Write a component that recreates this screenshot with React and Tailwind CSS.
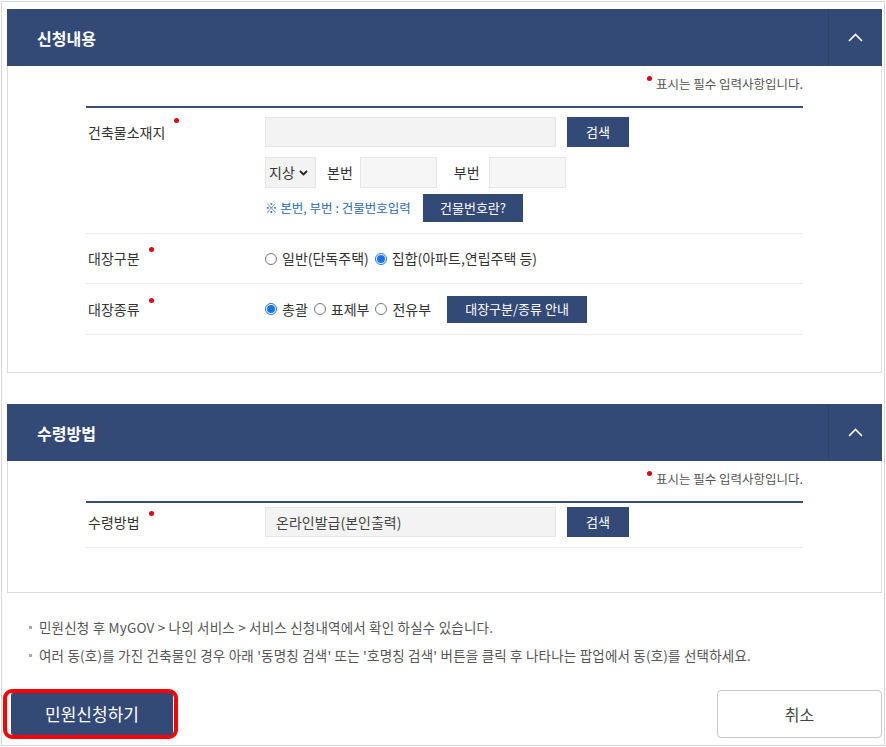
import { useState } from 'react';

const FONT = { fontFamily: '"Noto Sans CJK KR", "Noto Sans", sans-serif' };

function Req() {
  return <span className="inline-block w-[5px] h-[5px] rounded-full bg-[#e60012] ml-[9px] relative -top-[12px]" />;
}

function SectionHeader({ title }) {
  return (
    <div className="flex h-[57px] bg-[#344a76]">
      <div className="flex-1 flex items-center pl-[30px] text-white text-[16px] font-bold">{title}</div>
      <button className="w-[54px] flex items-center justify-center border-l border-[#2e4169]">
        <svg width="15" height="9" viewBox="0 0 15 9" fill="none">
          <path d="M1 8 L7.5 1.5 L14 8" stroke="#fff" strokeWidth="1.6" />
        </svg>
      </button>
    </div>
  );
}

function RequiredNote() {
  return (
    <div className="h-[40px] pt-[10px] flex justify-end items-start">
      <span className="text-[12.5px] leading-[16px] text-[#555]">
        <span className="inline-block w-[5px] h-[5px] rounded-full bg-[#e60012] mr-[4px] relative -top-[8px]" />
        표시는 필수 입력사항입니다.
      </span>
    </div>
  );
}

function NavyBtn({ children, className }) {
  return (
    <button className={`bg-[#344a76] text-white text-[13px] flex items-center justify-center shrink-0 ${className}`}>
      {children}
    </button>
  );
}

function Radio({ checked, label, onClick }) {
  return (
    <label className="flex items-center cursor-pointer" onClick={onClick}>
      {checked ? (
        <span className="w-[12px] h-[12px] rounded-full border border-[#1a73e8] bg-white flex items-center justify-center">
          <span className="w-[8px] h-[8px] rounded-full bg-[#1a73e8]" />
        </span>
      ) : (
        <span className="w-[12px] h-[12px] rounded-full border border-[#777] bg-white" />
      )}
      <span className="ml-[5px] text-[14px] text-[#333]">{label}</span>
    </label>
  );
}

export default function App() {
  const [gubun, setGubun] = useState('집합');
  const [jongryu, setJongryu] = useState('총괄');

  return (
    <div style={FONT} className="w-[884px] h-[745px] mt-px ml-px border border-[#d6d6d6] pl-[5px] pr-[2px] pt-[7px] bg-white">
      {/* 신청내용 */}
      <SectionHeader title="신청내용" />
      <div className="h-[307px] border border-t-0 border-[#dcdcdc] px-[78px]">
        <RequiredNote />
        <div className="h-[2px] bg-[#3a4d78]" />

        <div className="flex pt-[9px] pb-[11px] border-b border-[#ececec]">
          <div className="w-[179px] pl-[2px] h-[30px] flex items-center text-[14px] text-[#333]">
            건축물소재지<Req />
          </div>
          <div className="flex flex-col">
            <div className="flex gap-[11px]">
              <div className="w-[291px] h-[30px] bg-[#f3f3f3] border border-[#e6e6e6]" />
              <NavyBtn className="w-[62px] h-[30px]">검색</NavyBtn>
            </div>
            <div className="flex items-center mt-[10px] h-[31px] text-[14px] text-[#333]">
              <div className="w-[51px] h-[31px] bg-[#f3f3f3] border border-[#e6e6e6] flex items-center pl-[3px]">
                <span>지상</span>
                <svg className="ml-[4px]" width="9" height="6" viewBox="0 0 9 6" fill="none">
                  <path d="M1 1 L4.5 4.5 L8 1" stroke="#222" strokeWidth="1.8" />
                </svg>
              </div>
              <span className="ml-[11px]">본번</span>
              <div className="ml-[7px] w-[77px] h-[31px] bg-[#f6f6f6] border border-[#e6e6e6]" />
              <span className="ml-[17px]">부번</span>
              <div className="ml-[9px] w-[77px] h-[31px] bg-[#f6f6f6] border border-[#e6e6e6]" />
            </div>
            <div className="flex items-center mt-[6px]">
              <span className="text-[12.5px] text-[#2b67b8] w-[158px]">※ 본번, 부번 : 건물번호입력</span>
              <NavyBtn className="w-[100px] h-[28px]">건물번호란?</NavyBtn>
            </div>
          </div>
        </div>

        <div className="flex items-center h-[50px] border-b border-[#ececec]">
          <div className="w-[179px] pl-[2px] text-[14px] text-[#333]">
            대장구분<Req />
          </div>
          <div className="flex items-center gap-[6px]">
            <Radio checked={gubun === '일반'} label="일반(단독주택)" onClick={() => setGubun('일반')} />
            <Radio checked={gubun === '집합'} label="집합(아파트,연립주택 등)" onClick={() => setGubun('집합')} />
          </div>
        </div>

        <div className="flex items-center h-[51px] border-b border-[#ececec]">
          <div className="w-[179px] pl-[2px] text-[14px] text-[#333]">
            대장종류<Req />
          </div>
          <div className="flex items-center gap-[6px]">
            <Radio checked={jongryu === '총괄'} label="총괄" onClick={() => setJongryu('총괄')} />
            <Radio checked={jongryu === '표제부'} label="표제부" onClick={() => setJongryu('표제부')} />
            <Radio checked={jongryu === '전유부'} label="전유부" onClick={() => setJongryu('전유부')} />
          </div>
          <NavyBtn className="ml-[16px] w-[140px] h-[27px]">대장구분/종류 안내</NavyBtn>
        </div>
      </div>

      {/* 수령방법 */}
      <div className="mt-[31px]">
        <SectionHeader title="수령방법" />
        <div className="h-[132px] border border-t-0 border-[#dcdcdc] px-[78px]">
          <RequiredNote />
          <div className="h-[2px] bg-[#3a4d78]" />
          <div className="flex items-center pt-[4px] pb-[10px] border-b border-[#ececec]">
            <div className="w-[179px] pl-[2px] text-[14px] text-[#333]">
              수령방법<Req />
            </div>
            <div className="w-[291px] h-[30px] bg-[#f3f3f3] border border-[#e6e6e6] flex items-center pl-[10px] text-[14px] text-[#444]">
              온라인발급(본인출력)
            </div>
            <NavyBtn className="ml-[11px] w-[62px] h-[30px]">검색</NavyBtn>
          </div>
        </div>
      </div>

      {/* 안내 */}
      <div className="mt-[25px] pl-[22px] flex flex-col gap-[10px] text-[13.5px] text-[#555] tracking-[0.2px]">
        <div className="flex items-center h-[18px]">
          <span className="w-[3px] h-[3px] bg-[#aaa] mr-[7px]" />
          민원신청 후 MyGOV &gt; 나의 서비스 &gt; 서비스 신청내역에서 확인 하실수 있습니다.
        </div>
        <div className="flex items-center h-[18px]">
          <span className="w-[3px] h-[3px] bg-[#aaa] mr-[7px]" />
          여러 동(호)를 가진 건축물인 경우 아래 '동명칭 검색' 또는 '호명칭 검색' 버튼을 클릭 후 나타나는 팝업에서 동(호)를 선택하세요.
        </div>
      </div>

      {/* 버튼 */}
      <div className="mt-[25px] flex justify-between items-center -ml-[4px]">
        <div className="w-[175px] h-[50px] border-[4px] border-[#f00] rounded-[9px] flex items-center pl-[4px]">
          <button className="w-[162px] h-[42px] bg-[#344a76] rounded-[2px] text-white text-[17px]">민원신청하기</button>
        </div>
        <button className="w-[165px] h-[48px] border border-[#c8c8c8] rounded-[4px] bg-white text-[16px] text-[#444]">취소</button>
      </div>
    </div>
  );
}
